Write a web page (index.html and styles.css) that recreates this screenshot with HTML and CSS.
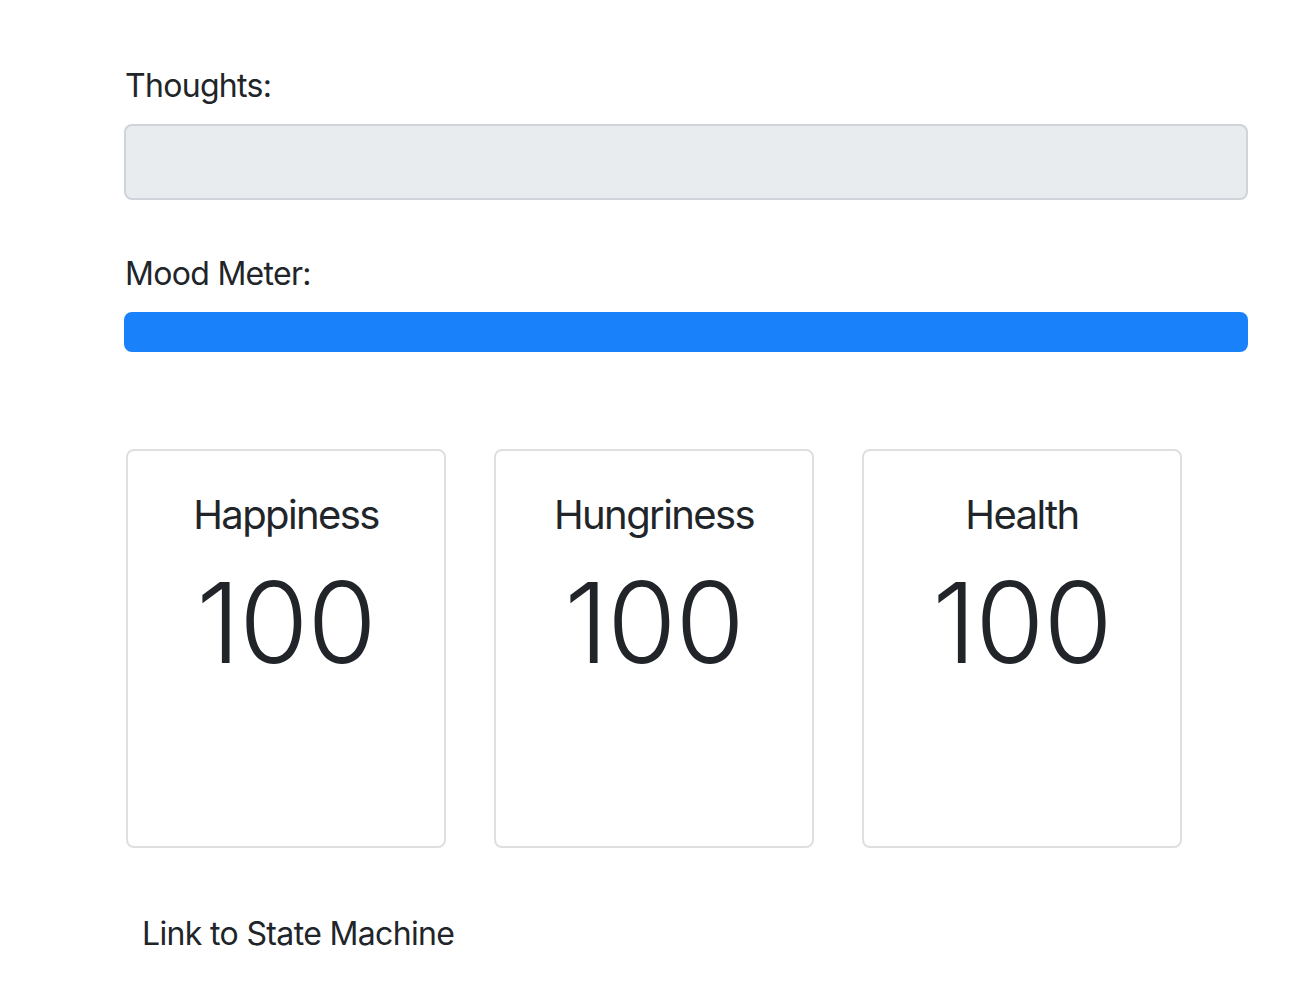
FILE: index.html
```html
<!DOCTYPE html>
<html lang="en">
<head>
<meta charset="utf-8">
<title>Pet</title>
<link rel="stylesheet" href="styles.css">
</head>
<body>
<main class="page">
  <div class="form-group">
    <label class="label" for="thoughts">Thoughts:</label>
    <input class="form-control" id="thoughts" type="text" readonly>
  </div>
  <div class="form-group">
    <div class="label">Mood Meter:</div>
    <div class="progress"><div class="progress-bar" style="width:100%"></div></div>
  </div>
  <div class="cards">
    <div class="card">
      <h5 class="card-title">Happiness</h5>
      <div class="stat">100</div>
    </div>
    <div class="card">
      <h5 class="card-title">Hungriness</h5>
      <div class="stat">100</div>
    </div>
    <div class="card">
      <h5 class="card-title">Health</h5>
      <div class="stat">100</div>
    </div>
  </div>
  <a class="link" href="#">Link to State Machine</a>
</main>
</body>
</html>
```
FILE: styles.css
```css
* { box-sizing: border-box; }
html, body { margin: 0; padding: 0; background: #fff; }
body {
  font-family: Inter, "Noto Sans", "Liberation Sans", sans-serif;
  color: #212529;
  font-size: 32px;
  line-height: 48px;
}
.page {
  width: 1124px;
  margin-left: 124px;
  padding-top: 60px;
  display: flex;
  flex-direction: column;
}
.form-group {
  display: flex;
  flex-direction: column;
  margin-bottom: 48px;
}
.label {
  display: block;
  padding-top: 2px;
  margin: 0 0 14px 1px;
  letter-spacing: -0.7px;
}
.form-control {
  display: block;
  width: 100%;
  height: 76px;
  border: 2px solid #ced4da;
  border-radius: 8px;
  background: #e9ecef;
  font: inherit;
  outline: none;
}
.progress {
  height: 40px;
  border-radius: 8px;
  background: #e9ecef;
  overflow: hidden;
  display: flex;
}
.progress-bar { background: #1982fb; height: 100%; }
.cards {
  display: flex;
  gap: 48px;
  margin: 49px 0 0 2px;
}
.card {
  width: 320px;
  height: 399px;
  border: 2px solid #dfdfdf;
  border-radius: 8px;
  padding: 40px;
  display: flex;
  flex-direction: column;
  align-items: center;
}
.card-title {
  margin: 0;
  font-size: 40px;
  line-height: 48px;
  font-weight: 400;
  letter-spacing: -1.6px;
}
.stat {
  margin-top: 16px;
  font-size: 112px;
  line-height: 134px;
  font-weight: 300;
  letter-spacing: -1px;
}
.link {
  align-self: flex-start;
  margin: 62px 0 0 18px;
  color: #212529;
  text-decoration: none;
  letter-spacing: -0.65px;
}
```
